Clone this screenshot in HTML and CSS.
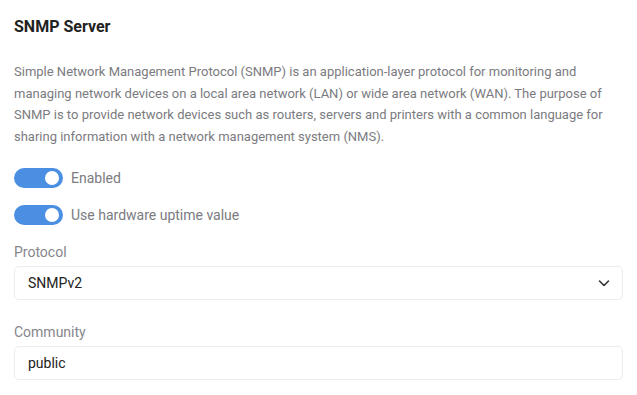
FILE: index.html
```html
<!DOCTYPE html>
<html lang="en">
<head>
    <meta charset="UTF-8">
    <meta name="viewport" content="width=device-width, initial-scale=1.0">
    <title>SNMP Server</title>
    <link rel="stylesheet" href="styles.css">
</head>
<body>
    <div class="container">
        <h2>SNMP Server</h2>
        <p class="desc">Simple Network Management Protocol (SNMP) is an application-layer protocol for monitoring and managing network devices on a local area network (LAN) or wide area network (WAN). The purpose of SNMP is to provide network devices such as routers, servers and printers with a common language for sharing information with a network management system (NMS).</p>

        <!-- Schalter -->
        <label class="switch-row">
            <span class="switch on"><span class="knob"></span></span>
            <span>Enabled</span>
        </label>
        <label class="switch-row">
            <span class="switch on"><span class="knob"></span></span>
            <span>Use hardware uptime value</span>
        </label>

        <div class="field">
            <div class="field-label">Protocol</div>
            <div class="input select">
                <span>SNMPv2</span>
                <svg width="14" height="14" viewBox="0 0 14 14"><path d="M2.5 5l4.5 4.5 4.5-4.5" fill="none" stroke="#333" stroke-width="1.6" stroke-linecap="round" stroke-linejoin="round"/></svg>
            </div>
        </div>

        <div class="field">
            <div class="field-label">Community</div>
            <div class="input">public</div>
        </div>
    </div>
</body>
</html>
```

FILE: styles.css
```css
body {
    margin: 0;
    font-family: Roboto, "Liberation Sans", sans-serif;
    background-color: #ffffff;
}
.container {
    padding: 17px 14px 12px 14px;
}
h2 {
    margin: 0;
    font-size: 16px;
    line-height: 20px;
    font-weight: 700;
    color: #222;
}
.desc {
    margin: 24px 0 20px 0;
    font-size: 13px;
    line-height: 21.7px;
    color: #7b7b7f;
}
.switch-row {
    display: flex;
    align-items: center;
    gap: 8px;
    height: 20px;
    margin-bottom: 17px;
    font-size: 14px;
    color: #7b7b80;
}
.switch {
    position: relative;
    width: 49px;
    height: 20px;
    border-radius: 10px;
    background-color: #4a8fe2;
}
.switch .knob {
    position: absolute;
    top: 3px;
    right: 4px;
    width: 14px;
    height: 14px;
    border-radius: 50%;
    background-color: #fff;
}
.field {
    margin-bottom: 22px;
}
.field:last-child {
    margin-bottom: 0;
}
.field-label {
    font-size: 14px;
    line-height: 20px;
    color: #86868b;
    margin-bottom: 4px;
}
.input {
    display: flex;
    align-items: center;
    justify-content: space-between;
    height: 32px;
    padding: 0 11px 0 13px;
    border: 1px solid #ececee;
    border-radius: 5px;
    font-size: 14px;
    color: #222;
}
```
